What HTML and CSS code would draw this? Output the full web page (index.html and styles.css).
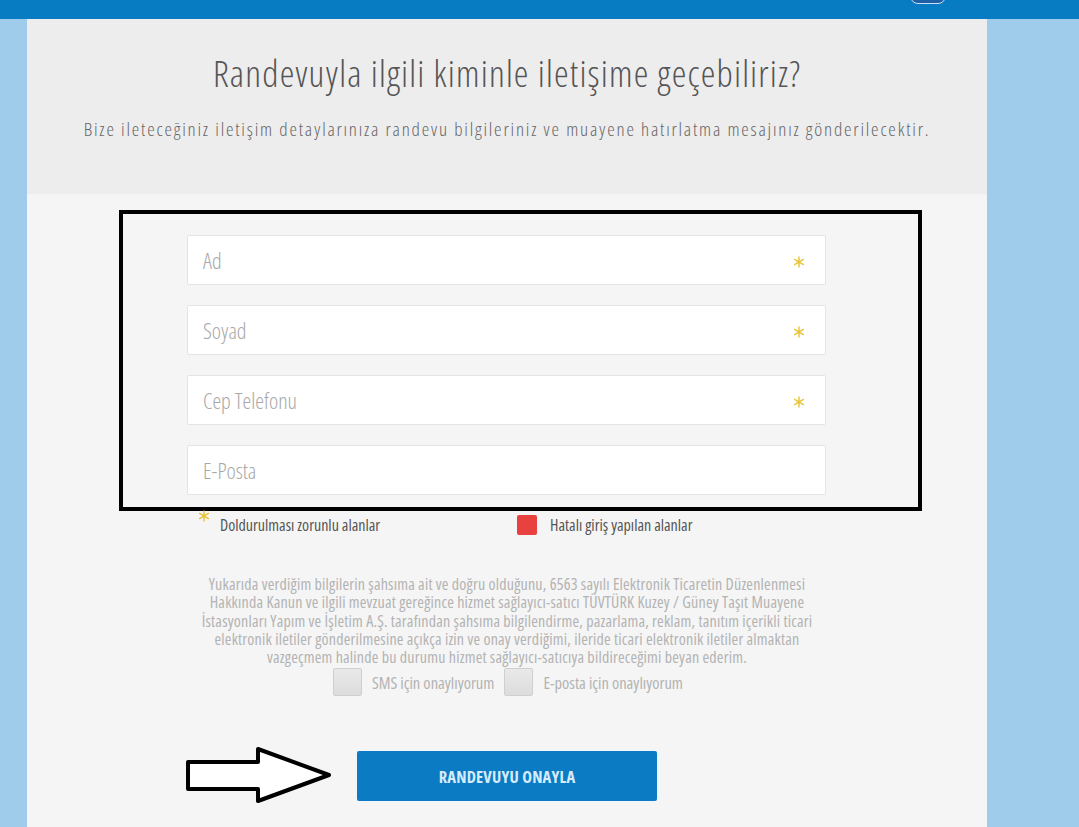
FILE: index.html
```html
<!DOCTYPE html>
<html lang="tr">
<head>
<meta charset="utf-8">
<title>Randevu</title>
<link rel="stylesheet" href="styles.css">
</head>
<body>
<div class="topbar"><div class="topbar-icon"></div></div>
<div class="panel">
  <div class="panel-head">
    <h1 class="title">Randevuyla ilgili kiminle iletişime geçebiliriz?</h1>
    <p class="subtitle">Bize ileteceğiniz iletişim detaylarınıza randevu bilgileriniz ve muayene hatırlatma mesajınız gönderilecektir.</p>
  </div>
  <div class="panel-body">
    <div class="frame">
      <div class="field"><input class="field-input" type="text" placeholder="Ad"><svg class="req" width="12" height="12" viewBox="0 0 12 12"><path d="M6 0.5V11.5M1.2 3.2L10.8 8.8M1.2 8.8L10.8 3.2" stroke="#e8c334" stroke-width="1.4"/></svg></div>
      <div class="field"><input class="field-input" type="text" placeholder="Soyad"><svg class="req" width="12" height="12" viewBox="0 0 12 12"><path d="M6 0.5V11.5M1.2 3.2L10.8 8.8M1.2 8.8L10.8 3.2" stroke="#e8c334" stroke-width="1.4"/></svg></div>
      <div class="field"><input class="field-input" type="text" placeholder="Cep Telefonu"><svg class="req" width="12" height="12" viewBox="0 0 12 12"><path d="M6 0.5V11.5M1.2 3.2L10.8 8.8M1.2 8.8L10.8 3.2" stroke="#e8c334" stroke-width="1.4"/></svg></div>
      <div class="field"><input class="field-input" type="text" placeholder="E-Posta"></div>
    </div>
    <div class="legend">
      <div class="legend-item"><svg class="legend-star" width="12" height="12" viewBox="0 0 12 12"><path d="M6 0.5V11.5M1.2 3.2L10.8 8.8M1.2 8.8L10.8 3.2" stroke="#e8c334" stroke-width="1.4"/></svg><span>Doldurulması zorunlu alanlar</span></div>
      <div class="legend-item"><span class="legend-red"></span><span>Hatalı giriş yapılan alanlar</span></div>
    </div>
    <p class="consent">Yukarıda verdiğim bilgilerin şahsıma ait ve doğru olduğunu, 6563 sayılı Elektronik Ticaretin Düzenlenmesi<br>Hakkında Kanun ve ilgili mevzuat gereğince hizmet sağlayıcı-satıcı TÜVTÜRK Kuzey / Güney Taşıt Muayene<br>İstasyonları Yapım ve İşletim A.Ş. tarafından şahsıma bilgilendirme, pazarlama, reklam, tanıtım içerikli ticari<br>elektronik iletiler gönderilmesine açıkça izin ve onay verdiğimi, ileride ticari elektronik iletiler almaktan<br>vazgeçmem halinde bu durumu hizmet sağlayıcı-satıcıya bildireceğimi beyan ederim.</p>
    <div class="checks">
      <label class="check"><span class="check-box"></span><span>SMS için onaylıyorum</span></label>
      <label class="check"><span class="check-box"></span><span>E-posta için onaylıyorum</span></label>
    </div>
    <div class="submit-row">
      <svg class="arrow" width="146" height="58" viewBox="0 0 146 58"><polygon points="2,16 72,16 72,3 143,29 72,55 72,43 2,43" fill="#fff" stroke="#000" stroke-width="4" stroke-linejoin="round"/></svg>
      <button class="submit" type="button">RANDEVUYU ONAYLA</button>
    </div>
  </div>
</div>
</body>
</html>
```
FILE: styles.css
```css
* { box-sizing: border-box; }
html, body { margin: 0; padding: 0; }
body {
  background: #a0ccec;
  font-family: "Open Sans", "Noto Sans", sans-serif;
  font-stretch: 75%;
  height: 827px;
  overflow: hidden;
}
.topbar {
  height: 19px;
  background: #087cc3;
  display: flex;
  justify-content: flex-end;
  padding-right: 133px;
  overflow: hidden;
}
.topbar-icon {
  width: 36px;
  height: 20px;
  margin-top: -16px;
  border: 1.5px solid #c9dff3;
  border-radius: 0 0 8px 8px;
  background: #1f5fa6;
}
.panel {
  width: 960px;
  margin-left: 27px;
  background: #f5f5f5;
  min-height: 808px;
}
.panel-head {
  height: 175px;
  background: #eeedee;
  text-align: center;
  padding-top: 32px;
}
.title {
  margin: 0;
  font-weight: 300;
  font-size: 37px;
  line-height: 44px;
  color: #555;
  letter-spacing: 1.2px;
}
.subtitle {
  margin: 22px 0 0;
  font-size: 19px;
  font-weight: 300;
  line-height: 24px;
  color: #666;
  letter-spacing: 1.8px;
}
.panel-body {
  padding-top: 16px;
}
.frame {
  margin-left: 92px;
  width: 803px;
  border: 4px solid #000;
  padding: 21px 92px 12px 64px;
  display: flex;
  flex-direction: column;
  gap: 20px;
}
.field {
  height: 50px;
  background: #fff;
  border: 1px solid #e4e4e4;
  border-radius: 2px;
  display: flex;
  align-items: center;
  padding: 0 20px 0 15px;
}
.field-input {
  flex: 1;
  border: none;
  outline: none;
  background: transparent;
  font-family: inherit;
  font-stretch: 75%;
  font-weight: 300;
  font-size: 22px;
  color: #555;
  padding: 0;
}
.field-input::placeholder { color: #a8a8a8; }
.req {
  flex: none;
  margin-top: 3px;
}
.legend {
  margin-left: 160px;
  width: 640px;
  display: grid;
  grid-template-columns: 330px 310px;
  padding-top: 4px;
  font-size: 16px;
  color: #555;
}
.legend-item {
  display: flex;
  align-items: center;
  gap: 13px;
  height: 20px;
}
.legend-item:first-child { padding-left: 11px; gap: 10px; }
.legend-star {
  flex: none;
  align-self: flex-start;
  margin-top: -5px;
}
.legend-red {
  width: 20px;
  height: 20px;
  background: #e8413f;
  border-radius: 2px;
}
.consent {
  margin: 40px 0 0;
  text-align: center;
  font-size: 16px;
  line-height: 18.3px;
  letter-spacing: 0.2px;
  color: #b3b3b3;
}
.checks {
  display: flex;
  justify-content: center;
  gap: 10px;
  margin-top: 2px;
  padding-left: 2px;
}
.check {
  display: flex;
  align-items: center;
  gap: 10px;
  font-size: 16.5px;
  color: #b3b3b3;
}
.check-box {
  width: 29px;
  height: 28px;
  border: 1px solid #cfcfcf;
  border-radius: 2px;
  background: linear-gradient(#e9e9e9, #dcdcdc);
}
.submit-row {
  margin-top: 52px;
  display: grid;
  grid-template-columns: 330px 300px 330px;
  align-items: center;
}
.arrow {
  justify-self: end;
  margin-right: 25px;
  margin-top: -2px;
}
.submit {
  height: 50px;
  background: #0b7bc4;
  border: none;
  border-radius: 2px;
  color: #d6ecfb;
  font-family: inherit;
  font-stretch: 75%;
  font-weight: bold;
  font-size: 16.5px;
  letter-spacing: 0.2px;
}
```
